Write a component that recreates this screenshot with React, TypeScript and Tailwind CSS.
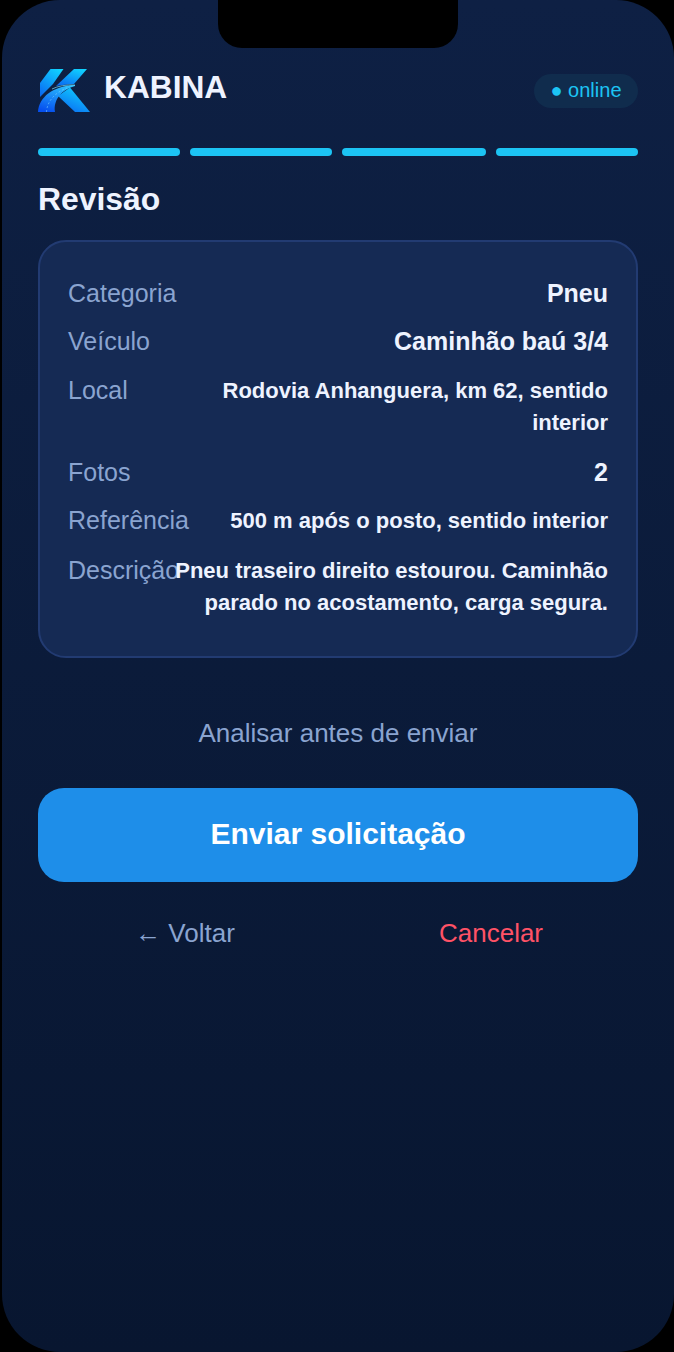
const rows = [
  { label: 'Categoria', value: 'Pneu', big: true },
  { label: 'Veículo', value: 'Caminhão baú 3/4', big: true },
  { label: 'Local', value: 'Rodovia Anhanguera, km 62, sentido interior' },
  { label: 'Fotos', value: '2', big: true },
  { label: 'Referência', value: '500 m após o posto, sentido interior' },
  { label: 'Descrição', value: 'Pneu traseiro direito estourou. Caminhão parado no acostamento, carga segura.' },
];

function Logo() {
  return (
    <svg viewBox="0 0 52 43" className="h-[43px] w-[52px] shrink-0">
      <defs>
        <linearGradient id="k-top" x1="0.8" y1="0" x2="0.2" y2="1">
          <stop offset="0" stopColor="#10d2ff" />
          <stop offset="1" stopColor="#0a6cf2" />
        </linearGradient>
        <linearGradient id="k-road" x1="0.7" y1="0" x2="0.3" y2="1">
          <stop offset="0" stopColor="#2cc0ff" />
          <stop offset="1" stopColor="#0650ee" />
        </linearGradient>
      </defs>
      <path d="M12.5 0H25.5L15 15L2 28V14Z" fill="url(#k-top)" />
      <path d="M36 0H49L36 15C30 15 24 16 18 17Z" fill="url(#k-top)" />
      <path d="M20 27L32 18.5L52 43H37Z" fill="url(#k-top)" />
      <path d="M0 43C1 28 15 17 37 16V17C25 20 15 30 17 43Z" fill="url(#k-road)" />
      <path d="M8.5 43C9 33 16 24 29 19" fill="none" stroke="#8fdcff" strokeWidth="0.5" strokeDasharray="2 2" />
      <path d="M14 20C20 17 28 15.5 37 16" fill="none" stroke="#7fe3ff" strokeWidth="0.7" />
    </svg>
  );
}

export default function App() {
  return (
    <div className="h-[1352px] w-[674px] bg-black pl-[2px] font-['Liberation_Sans',Arial,sans-serif]">
      <div className="relative h-full overflow-hidden rounded-[58px] bg-gradient-to-b from-[#0e2044] to-[#081630] px-9">
        <div className="absolute left-[216px] top-0 h-12 w-60 rounded-b-3xl bg-black" />

        <header className="mt-[68px] flex h-[44px] items-center justify-between">
          <div className="flex items-center gap-[14px]">
            <Logo />
            <span className="pb-[5px] text-[31.7px] font-bold leading-none text-[#eef3ff]">KABINA</span>
          </div>
          <span className="mt-[2px] flex h-[34px] items-center rounded-full bg-[#102c4d] px-[16.5px] pb-[2px] text-xl text-[#1cc4f4]">
            ● online
          </span>
        </header>

        <div className="mt-9 grid grid-cols-[142px_142px_144px_142px] gap-[10px]">
          {[0, 1, 2, 3].map((i) => (
            <div key={i} className="h-2 rounded-full bg-[#1cc4f4]" />
          ))}
        </div>

        <h1 className="mt-[25px] text-[31.9px] font-bold leading-9 text-[#eef3ff]">Revisão</h1>

        <section className="mt-[23px] flex flex-col gap-[18px] rounded-[28px] border-2 border-[#223b72] bg-[#152a54] px-7 pb-[37.25px] pt-9">
          {rows.map((row) => (
            <div key={row.label} className="flex">
              <span className="w-[107px] shrink-0 whitespace-nowrap text-[25px] leading-[30.25px] text-[#8aa4d0]">
                {row.label}
              </span>
              <span
                className={
                  row.big
                    ? 'flex-1 text-right text-[25px] font-bold leading-[30.25px] text-[#eef3ff]'
                    : 'flex-1 text-right text-[22px] font-bold leading-8 text-[#eef3ff]'
                }
              >
                {row.value}
              </span>
            </div>
          ))}
        </section>

        <p className="mt-[59px] text-center text-[26px] leading-8 text-[#8aa4d0]">Analisar antes de enviar</p>

        <button className="mt-[39px] h-[94px] w-full rounded-[26px] bg-[#1e8ee9] pb-1 text-[30px] font-bold text-white">
          Enviar solicitação
        </button>

        <div className="mt-[35px] flex gap-3">
          <button className="flex-1 text-[26px] leading-8 text-[#8aa4d0]">← Voltar</button>
          <button className="flex-1 text-[26px] leading-8 text-[#ff5266]">Cancelar</button>
        </div>
      </div>
    </div>
  );
}
